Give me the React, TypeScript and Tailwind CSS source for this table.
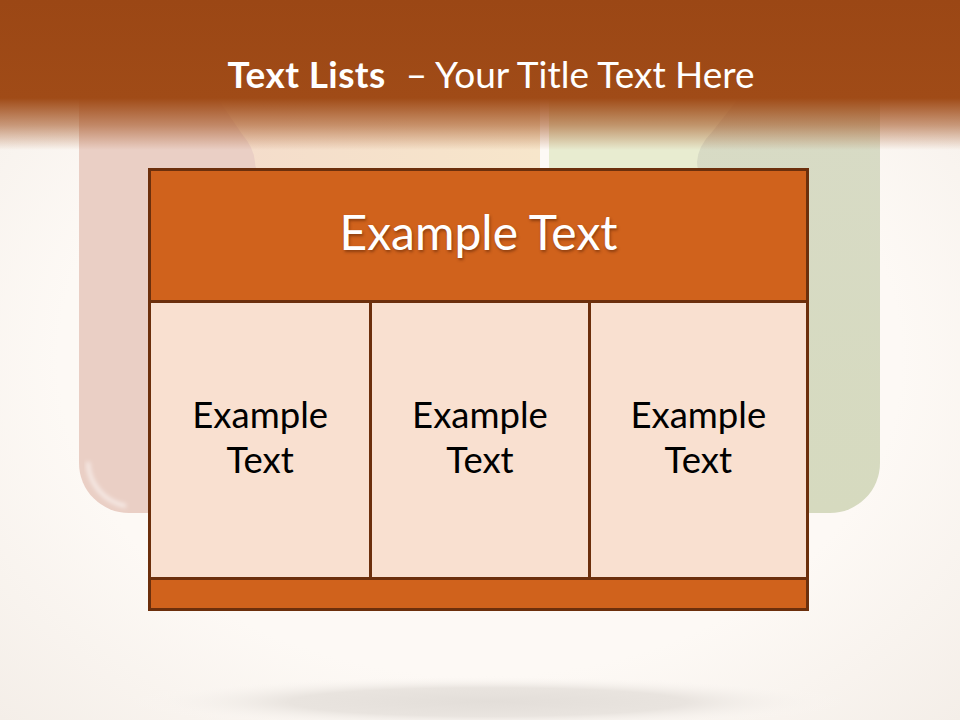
const cells = ["Example Text", "Example Text", "Example Text"];

// soft shapes sitting behind the table
function BackdropShapes() {
  return (
    <svg
      className="absolute inset-0"
      width={960}
      height={720}
      viewBox="0 0 960 720"
    >
      <defs>
        <linearGradient id="peach" x1="0" x2="1" y1="0" y2="0">
          <stop offset="0" stopColor="#f4dccb" />
          <stop offset="1" stopColor="#f7e6cb" />
        </linearGradient>
        <linearGradient id="sage" x1="0" x2="0" y1="0" y2="1">
          <stop offset="0" stopColor="#d8dbc6" />
          <stop offset="1" stopColor="#d6dabf" />
        </linearGradient>
        <radialGradient id="floor" cx="0.5" cy="0.5" r="0.5">
          <stop offset="0" stopColor="#e3ded9" />
          <stop offset="0.55" stopColor="#e9e4df" />
          <stop offset="1" stopColor="#fcf8f4" stopOpacity="0" />
        </radialGradient>
        <filter id="soft">
          <feGaussianBlur stdDeviation="2" />
        </filter>
      </defs>

      {/* left pink block */}
      <path d="M79,80 H540 V513 H129 A50,50 0 0 1 79,463 Z" fill="#eacfc5" />
      <path
        d="M540,90 V172 H262 Q255,172 255,162 Q254,148 242,134 L212,90 Z"
        fill="url(#peach)"
      />
      <path
        d="M88,462 A46,46 0 0 0 126,506"
        stroke="#ffffff"
        strokeOpacity="0.6"
        strokeWidth="4"
        fill="none"
        filter="url(#soft)"
      />

      {/* right sage block */}
      <path d="M549,80 H880 V463 A50,50 0 0 1 830,513 H549 Z" fill="url(#sage)" />
      <path
        d="M549,90 V172 H702 Q697,172 697,162 Q698,146 712,132 L745,90 Z"
        fill="#e8ecd0"
      />

      {/* floor shadow */}
      <ellipse cx="488" cy="702" rx="360" ry="26" fill="url(#floor)" />
    </svg>
  );
}

export default function App() {
  return (
    <div className="relative h-[720px] w-[960px] overflow-hidden bg-[radial-gradient(ellipse_at_center,#fdf9f5_62%,#f4eee8_100%)] font-['Lato','Liberation_Sans',sans-serif]">
      <BackdropShapes />

      {/* Title band */}
      <div className="relative flex h-[150px] items-start justify-center bg-[linear-gradient(to_bottom,#9b4715_0px,#a04b17_98px,rgba(160,76,24,0.55)_125px,rgba(160,76,24,0)_150px)] pt-[52px] pl-[22px]">
        <h1 className="text-[37px] leading-[44px] text-white">
          <span className="font-bold tracking-[0.4px]">Text Lists</span>
          <span className="ml-[20px]">– Your Title Text Here</span>
        </h1>
      </div>

      {/* Table */}
      <div className="relative mt-[18px] ml-[148px] w-[661px] border-[3px] border-[#6c2f0c]">
        <div className="flex h-[129px] items-center justify-center bg-[#d0621c] pb-[7px]">
          <span className="text-[48px] text-white [text-shadow:1px_2px_3px_rgba(60,20,0,0.45)]">
            Example Text
          </span>
        </div>
        <div className="grid grid-cols-3 border-t-[3px] border-[#6c2f0c] bg-[#f9e0d0]">
          {cells.map((c, i) => (
            <div
              key={i}
              className={`flex h-[274px] items-center justify-center px-6 pb-[7px] text-center text-[36.5px] leading-[45px] text-black ${
                i > 0 ? "border-l-[3px] border-[#6c2f0c]" : ""
              }`}
            >
              {c}
            </div>
          ))}
        </div>
        <div className="h-[31px] border-t-[3px] border-[#6c2f0c] bg-[#d0621c]" />
      </div>
    </div>
  );
}
